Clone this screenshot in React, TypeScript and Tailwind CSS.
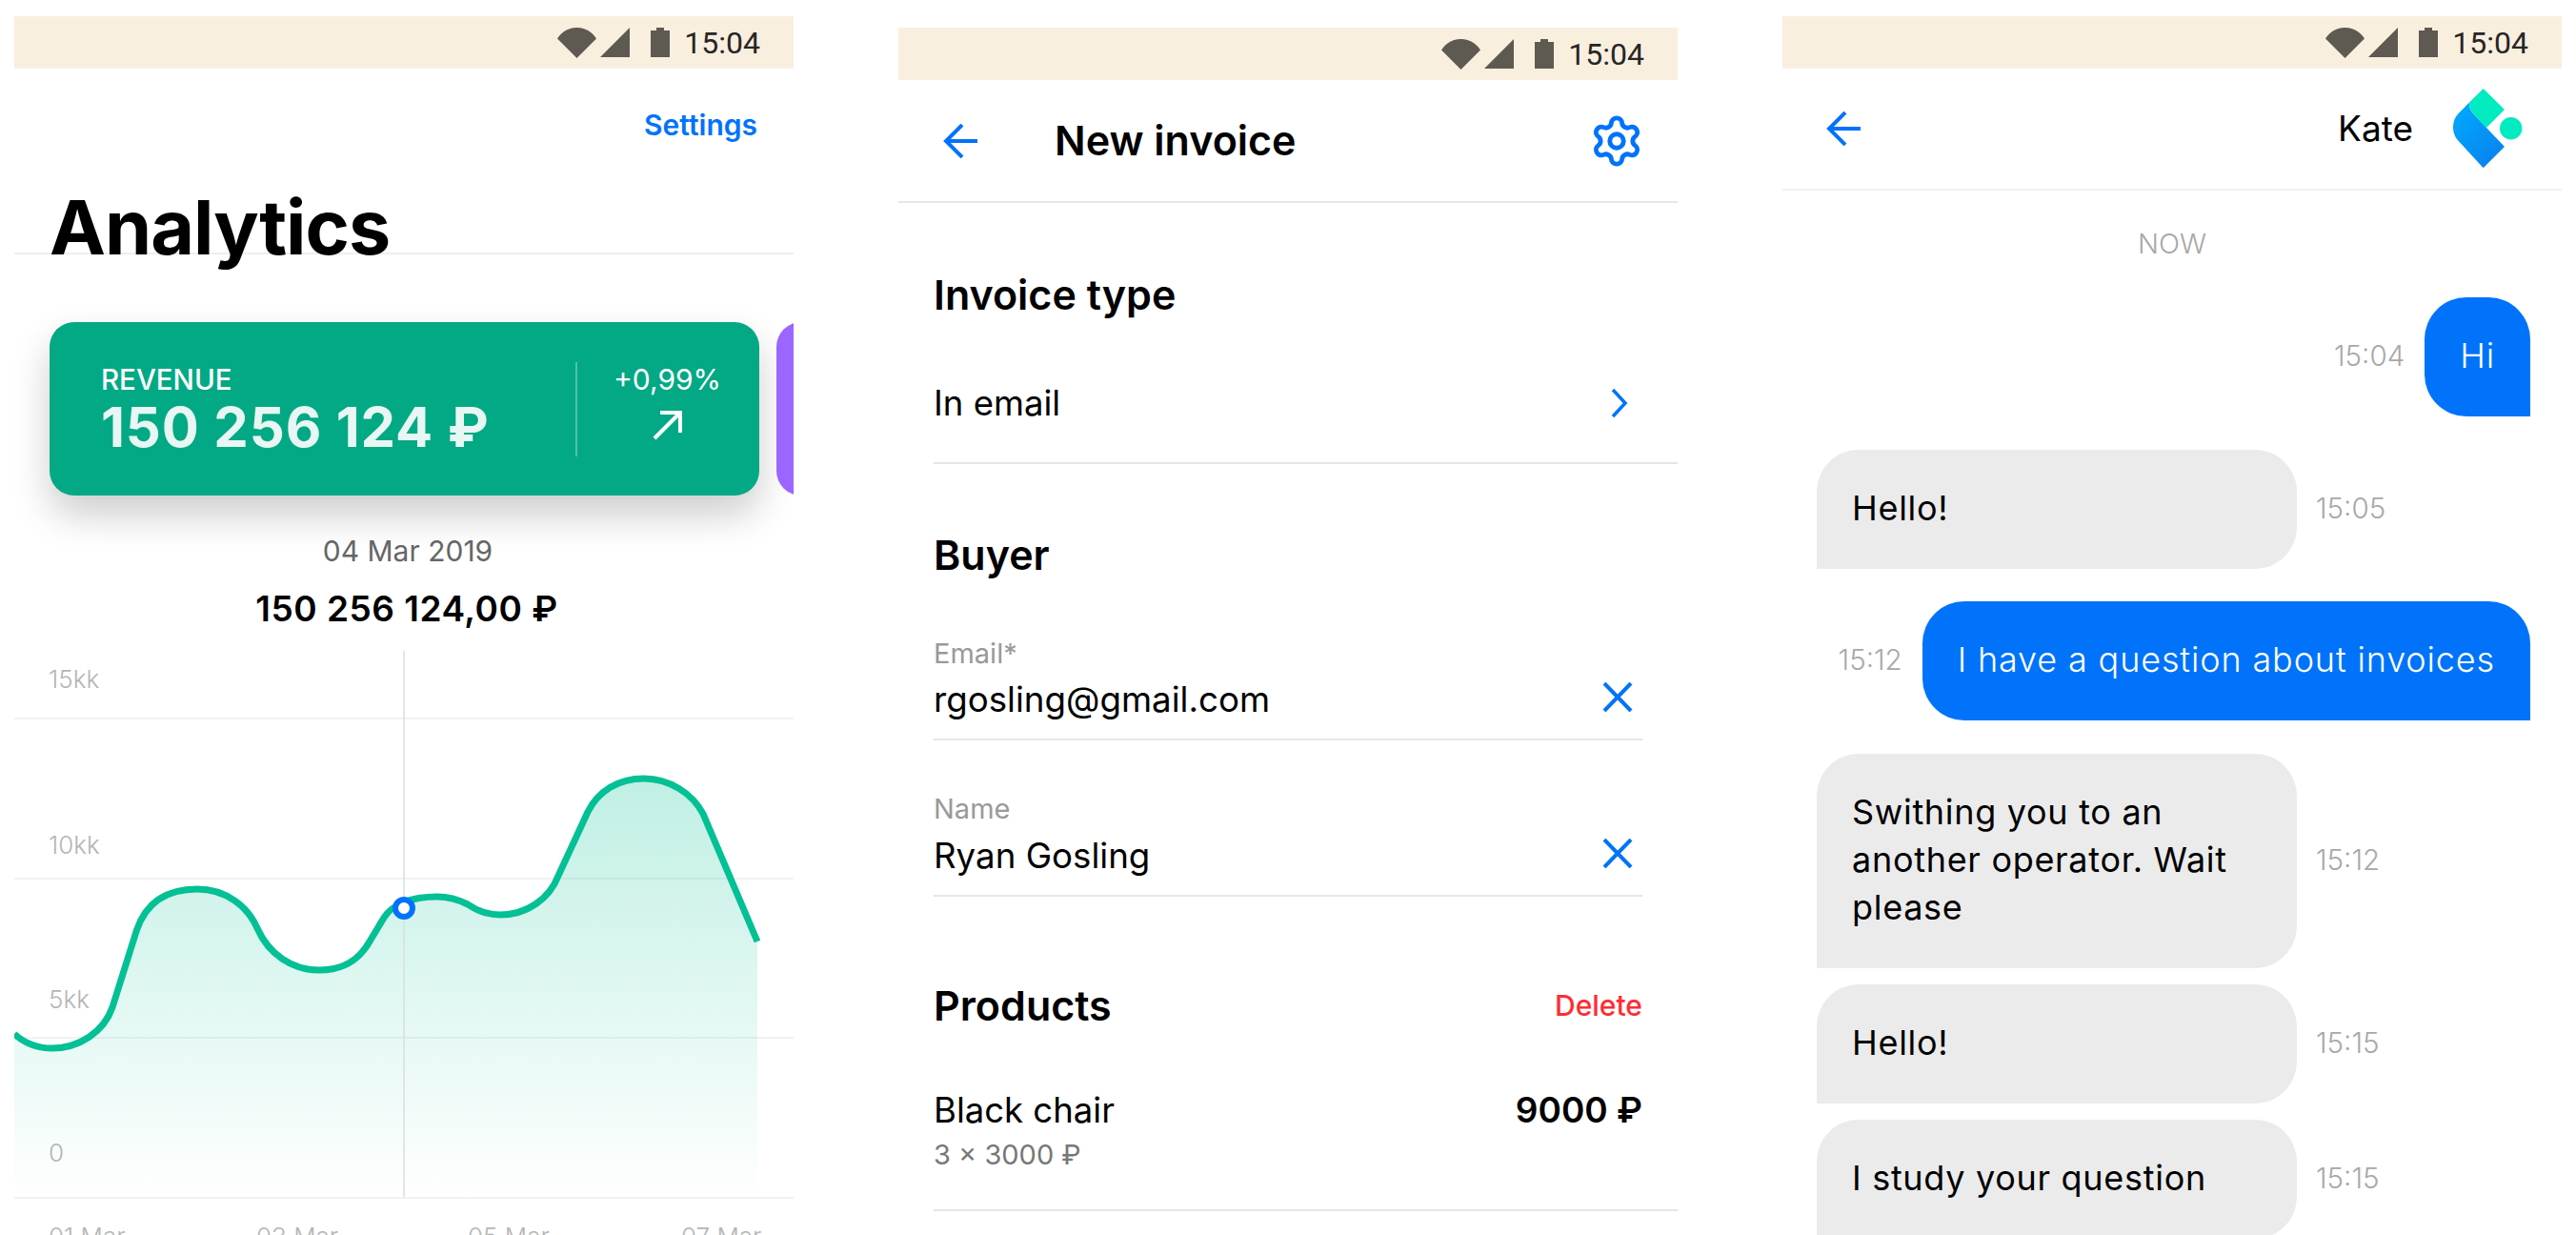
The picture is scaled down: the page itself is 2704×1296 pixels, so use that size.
import { Settings } from "lucide-react";

const StatusBar = () => {
    return (
        <div className="flex h-[55px] items-center justify-end bg-[#f9efdf] pr-[35px]">
            {/* wifi, signal, battery */}
            <svg width="41" height="32" viewBox="0 0 41 32" className="mr-[4px]">
                <path d="M20.5 32L0 11.5A24 24 0 0 1 41 11.5Z" fill="#5e5a52" />
            </svg>
            <svg width="31" height="31" viewBox="0 0 31 31" className="mr-[22px]">
                <path d="M31 0V31H0Z" fill="#5e5a52" />
            </svg>
            <svg width="20" height="31" viewBox="0 0 20 31" className="mr-[15px]">
                <path d="M0 3H6V0H14V3H20V31H0Z" fill="#5e5a52" />
            </svg>
            <span className="font-['Roboto'] text-[32px] leading-none text-[#262626]">15:04</span>
        </div>
    );
};

const BackArrow = () => (
    <svg width="36" height="36" viewBox="0 0 36 36" fill="none" stroke="#0073fa" strokeWidth="4">
        <path d="M36 18H3" />
        <path d="M20 1L3 18L20 35" />
    </svg>
);

const CloseIcon = () => (
    <svg width="32" height="31" viewBox="0 0 32 31" fill="none" stroke="#0073fa" strokeWidth="4" className="mb-[6px]">
        <path d="M2 1L30 30" />
        <path d="M30 1L2 30" />
    </svg>
);

const Analytics = () => {
    return (
        <section className="h-full w-[818px] shrink-0 overflow-hidden pt-[17px]">
            <StatusBar />
            <div className="h-[195px] border-b-2 border-[#eeeeee] pr-[38px] pl-[37px]">
                <div className="pt-[42px] text-right text-[30px] leading-[34px] font-semibold text-[#0073fa]">
                    Settings
                </div>
                <h1 className="mt-[50px] text-[79px] leading-[80px] font-bold tracking-[-1px] text-black">
                    Analytics
                </h1>
            </div>

            {/* cards */}
            <div className="mt-[71px] flex gap-[18px] pl-[37px]">
                <div className="flex h-[182px] w-[745px] shrink-0 items-center rounded-[26px] bg-[#03a984] shadow-[0_20px_40px_rgba(0,0,0,0.2)]">
                    <div className="flex-1 pt-[2px] pl-[54px] text-[#e8f7f3]">
                        <div className="text-[29.5px] leading-[32px] font-medium text-white">REVENUE</div>
                        <div className="mt-[3px] text-[58px] leading-[62px] font-bold tracking-[0.85px]">150 256 124 ₽</div>
                    </div>
                    <div className="mr-[2px] flex h-[99px] w-[191px] flex-col items-center border-l-2 border-white/30 text-white">
                        <div className="pt-[2px] text-[30px] leading-[32px]">+0,99%</div>
                        <svg width="32" height="32" viewBox="0 0 32 32" fill="none" stroke="#ffffff" strokeWidth="4" className="mt-[16px]">
                            <path d="M2 30L29 3" />
                            <path d="M8 3H29V24" />
                        </svg>
                    </div>
                </div>
                <div className="h-[182px] w-[745px] shrink-0 rounded-[26px] bg-[#9b66ff]" />
            </div>

            <div className="mt-[40px] pl-[8px] text-center text-[30px] leading-[36px] text-[#666666]">04 Mar 2019</div>
            <div className="mt-[21px] pl-[6px] text-center text-[37px] leading-[44px] font-semibold tracking-[0.5px] text-black">150 256 124,00 ₽</div>

            {/* chart */}
            <div className="relative mt-[22px] h-[575px]">
                <div className="flex h-[72px] items-end border-b-2 border-[#f2f2f2] pb-[26px] pl-[36px] text-[26px] leading-[28px] font-light text-[#b5b5b5]">15kk</div>
                <div className="flex h-[168px] items-end border-b-2 border-[#f2f2f2] pb-[20px] pl-[36px] text-[26px] leading-[28px] font-light text-[#b5b5b5]">10kk</div>
                <div className="flex h-[167px] items-end border-b-2 border-[#f2f2f2] pb-[25px] pl-[36px] text-[26px] leading-[28px] font-light text-[#b5b5b5]">5kk</div>
                <div className="flex h-[168px] items-end border-b-2 border-[#f2f2f2] pb-[32px] pl-[36px] text-[26px] leading-[28px] font-light text-[#b5b5b5]">0</div>
                <svg width="818" height="575" viewBox="0 0 818 575" fill="none" className="absolute top-0 left-0">
                    <defs>
                        <linearGradient id="area" x1="0" y1="134" x2="0" y2="575" gradientUnits="userSpaceOnUse">
                            <stop offset="0" stopColor="#03c095" stopOpacity="0.25" />
                            <stop offset="1" stopColor="#03c095" stopOpacity="0" />
                        </linearGradient>
                    </defs>
                    <path
                        d="M0 402C10 411 24 417 39.5 417C68 417 94 400 103 374L128.5 293C139 262 162 250 192 250C222 250 245 268 255 291C267 318 291 335 320 335C344 335 361 326 373 305L388 280C396 267 415 258 444 258C456 258 466 261 476 266C486 273 497 277 510 277C538 277 562 260 571 236L602 169C613 147 634 134 661 134C688 134 712 150 723 171L780 305V575H0Z"
                        fill="url(#area)"
                    />
                    <path d="M409 0V573" stroke="#d9dede" strokeWidth="1.5" />
                    <path
                        d="M0 402C10 411 24 417 39.5 417C68 417 94 400 103 374L128.5 293C139 262 162 250 192 250C222 250 245 268 255 291C267 318 291 335 320 335C344 335 361 326 373 305L388 280C396 267 415 258 444 258C456 258 466 261 476 266C486 273 497 277 510 277C538 277 562 260 571 236L602 169C613 147 634 134 661 134C688 134 712 150 723 171L780 305"
                        stroke="#03c095"
                        strokeWidth="7"
                    />
                    <circle cx="409" cy="270" r="9" fill="#ffffff" stroke="#0073fa" strokeWidth="6" />
                </svg>
            </div>
            <div className="mt-[26px] flex pl-[36px] text-[26px] leading-[28px] font-light text-[#b5b5b5]">
                <span className="w-[218px]">01 Mar</span>
                <span className="w-[222px]">03 Mar</span>
                <span className="w-[224px]">05 Mar</span>
                <span>07 Mar</span>
            </div>
        </section>
    );
};

const NewInvoice = () => {
    return (
        <section className="h-full w-[818px] shrink-0 overflow-hidden pt-[29px] text-black">
            <StatusBar />
            <header className="flex h-[129px] items-center border-b-2 border-[#e6e6e6] pr-[35px] pl-[47px]">
                <BackArrow />
                <h1 className="ml-[81px] flex-1 pb-[1px] text-[43px] leading-[50px] font-semibold">New invoice</h1>
                <Settings size={58} strokeWidth={2} color="#0073fa" />
            </header>

            <div className="pl-[37px]">
                <h2 className="mt-[71px] text-[43px] leading-[50px] font-semibold">Invoice type</h2>
                <div className="mt-[67px] flex items-center justify-between border-b-2 border-[#e6e6e6] pr-[52px] pb-[40px] text-[36.5px] leading-[44px]">
                    <span>In email</span>
                    <svg width="18" height="32" viewBox="0 0 18 32" fill="none" stroke="#0073fa" strokeWidth="3.5">
                        <path d="M2 2L15 16L2 30" />
                    </svg>
                </div>

                <h2 className="mt-[70px] text-[43px] leading-[50px] font-semibold">Buyer</h2>

                {/* fields */}
                <div className="mt-[62px] mr-[37px] border-b-2 border-[#e6e6e6] pb-[19px]">
                    <div className="text-[29px] leading-[34px] text-[#999999]">Email*</div>
                    <div className="mt-[9px] flex items-center justify-between pr-[10px] text-[36.7px] leading-[44px]">
                        <span>rgosling@gmail.com</span>
                        <CloseIcon />
                    </div>
                </div>
                <div className="mt-[55px] mr-[37px] border-b-2 border-[#e6e6e6] pb-[19px]">
                    <div className="text-[29px] leading-[34px] text-[#999999]">Name</div>
                    <div className="mt-[10px] flex items-center justify-between pr-[10px] text-[36.7px] leading-[44px]">
                        <span>Ryan Gosling</span>
                        <CloseIcon />
                    </div>
                </div>

                <div className="mt-[89px] mr-[37px] flex items-center justify-between">
                    <h2 className="text-[43px] leading-[50px] font-semibold">Products</h2>
                    <span className="text-[30px] leading-[36px] font-medium text-[#ff2d33]">Delete</span>
                </div>

                <div className="mt-[63px] border-b-2 border-[#e6e6e6] pr-[37px] pb-[40px]">
                    <div className="flex justify-between text-[36.5px] leading-[44px]">
                        <span>Black chair</span>
                        <span className="text-[37px] font-semibold">9000 ₽</span>
                    </div>
                    <div className="mt-[8px] text-[29px] leading-[34px] text-[#777777]">3 × 3000 ₽</div>
                </div>
            </div>
        </section>
    );
};

const Logo = () => (
    <svg width="73" height="84" viewBox="0 0 73 84">
        <defs>
            <linearGradient id="logo-blue" x1="0" y1="20" x2="50" y2="75" gradientUnits="userSpaceOnUse">
                <stop offset="0" stopColor="#00aaff" />
                <stop offset="1" stopColor="#0a82ee" />
            </linearGradient>
        </defs>
        <path
            d="M18.3 13.3L5 26.7C-1.7 34 -1.7 47 5 54.3L31.7 83.3L54 61L35 41L21 26C17 21 16 17 18.3 13.3Z"
            fill="url(#logo-blue)"
        />
        <path d="M31.7 0L54 22L35 41L21 26C17 21 16 17 18.3 13.3Z" fill="#00ebc0" />
        <circle cx="60.7" cy="41.7" r="11.7" fill="#00ebc0" />
    </svg>
);

const Time = ({ children }: { children: string }) => (
    <span className="mb-[3px] text-[29.5px] leading-[34px] font-light text-[#a8a8a8]">{children}</span>
);

const Incoming = ({ time, className, children }: { time: string; className: string; children: React.ReactNode }) => (
    <div className={`flex items-center gap-[20px] ${className}`}>
        <div className="w-[504px] rounded-[44px] rounded-bl-none bg-[#ebebeb] px-[37px] pt-[36px] pb-[39px] text-[36px] leading-[50px] tracking-[0.7px] text-black">
            {children}
        </div>
        <Time>{time}</Time>
    </div>
);

const Outgoing = ({ time, className, children }: { time: string; className: string; children: React.ReactNode }) => (
    <div className={`flex items-center justify-end gap-[21px] ${className}`}>
        <Time>{time}</Time>
        <div className="min-w-[110px] rounded-[44px] rounded-br-none bg-[#0073fa] px-[37px] pt-[36px] pb-[39px] text-center text-[36px] leading-[50px] font-light tracking-[0.86px] text-white">
            {children}
        </div>
    </div>
);

const Chat = () => {
    return (
        <section className="h-full w-[818px] shrink-0 overflow-hidden pt-[17px]">
            <StatusBar />
            <header className="flex h-[128px] items-center border-b-2 border-[#f2f2f2] pr-[41px] pl-[46px]">
                <BackArrow />
                <span className="mr-[42px] flex-1 text-right text-[37px] leading-[44px] text-black">Kate</span>
                <Logo />
            </header>

            <div className="mt-[39px] text-center text-[29px] leading-[34px] font-light text-[#a8a8a8]">NOW</div>

            <div className="pr-[33px] pl-[36px]">
                <Outgoing time="15:04" className="mt-[39px]">Hi</Outgoing>
                <Incoming time="15:05" className="mt-[35px]">Hello!</Incoming>
                <Outgoing time="15:12" className="mt-[34px]">I have a question about invoices</Outgoing>
                <Incoming time="15:12" className="mt-[35px]">Swithing you to an another operator. Wait please</Incoming>
                <Incoming time="15:15" className="mt-[17px]">Hello!</Incoming>
                <Incoming time="15:15" className="mt-[17px]">I study your question</Incoming>
            </div>
        </section>
    );
};

export default function App() {
    return (
        <div className="flex h-[1296px] gap-[110px] overflow-hidden bg-white px-[15px] font-['Inter',sans-serif]">
            <Analytics />
            <NewInvoice />
            <Chat />
        </div>
    );
}
